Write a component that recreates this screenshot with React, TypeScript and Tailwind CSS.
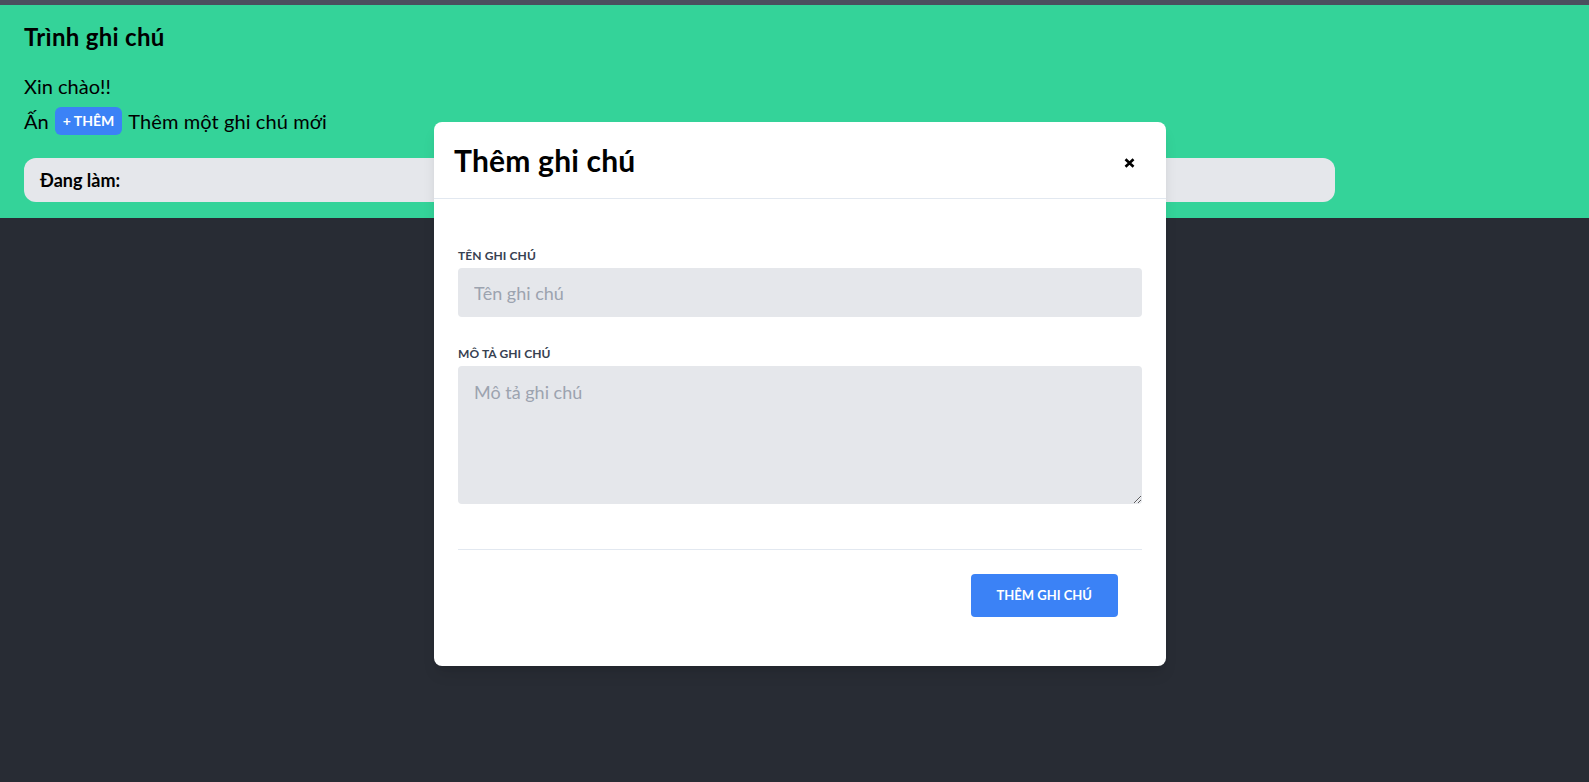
import React from "react";

export default function App() {
  return (
    <div className="relative h-[782px] w-full overflow-hidden bg-[#282c34] font-[Lato,sans-serif] text-black">
      <div className="h-[5px] bg-[#4b4f5e]" />
      <div className="bg-[#34d399] px-6 pt-4 pb-4">
        <h1 className="text-2xl leading-8 font-bold tracking-[0.3px]">Trình ghi chú</h1>
        <p className="mt-[19px] text-xl leading-7">Xin chào!!</p>
        <p className="mt-[7px] flex h-7 items-center text-xl leading-7">
          <span>Ấn</span>
          <span className="ml-[6px] mr-[6px] flex h-7 items-center rounded-md bg-[#3b82f6] px-2 text-sm font-bold text-white">
            + THÊM
          </span>
          <span className="tracking-[0.1px]">Thêm một ghi chú mới</span>
        </p>
        <div className="mt-[23px] flex h-11 w-[1311px] items-center rounded-xl bg-[#e5e7eb] px-4">
          <span className="text-lg font-bold">Đang làm:</span>
        </div>
      </div>

      <div className="absolute left-[434px] top-[122px] flex w-[732px] flex-col rounded-lg bg-white shadow-lg">
        <div className="flex items-start justify-between border-b border-[#e2e8f0] p-5">
          <h3 className="text-3xl leading-9 font-bold tracking-[0.2px]">Thêm ghi chú</h3>
          <button className="mt-[13px] mr-[9px] flex h-4 w-4 items-center justify-center">
            <svg width="11" height="10" viewBox="0 0 11 10">
              <path d="M1.5 1.2 L9.5 8.8 M9.5 1.2 L1.5 8.8" stroke="#000" strokeWidth="2.6" strokeLinecap="butt" />
            </svg>
          </button>
        </div>
        <div className="px-6 pt-6 pb-[25px]">
          <form className="pt-[25px]">
            <label className="mb-1 block text-xs leading-4 font-bold tracking-[0.1px] text-[#374151] uppercase">Tên ghi chú</label>
            <input
              className="block h-[49px] w-full rounded bg-[#e5e7eb] px-4 text-lg text-gray-700 placeholder-[#9ca3af] outline-none"
              placeholder="Tên ghi chú"
            />
            <label className="mt-[29px] mb-1 block text-xs leading-4 font-bold tracking-[0.1px] text-[#374151] uppercase">Mô tả ghi chú</label>
            <textarea
              className="block h-[138px] w-full rounded bg-[#e5e7eb] px-4 py-3 text-lg leading-7 text-gray-700 placeholder-[#9ca3af] outline-none"
              placeholder="Mô tả ghi chú"
            />
            <div className="mt-[45px] flex items-center justify-end border-t border-[#e2e8f0] p-6">
              <button
                type="button"
                className="flex h-[43px] items-center rounded bg-[#3b82f6] px-[26px] text-[13px] font-bold text-white uppercase"
              >
                Thêm ghi chú
              </button>
            </div>
          </form>
        </div>
      </div>
    </div>
  );
}
